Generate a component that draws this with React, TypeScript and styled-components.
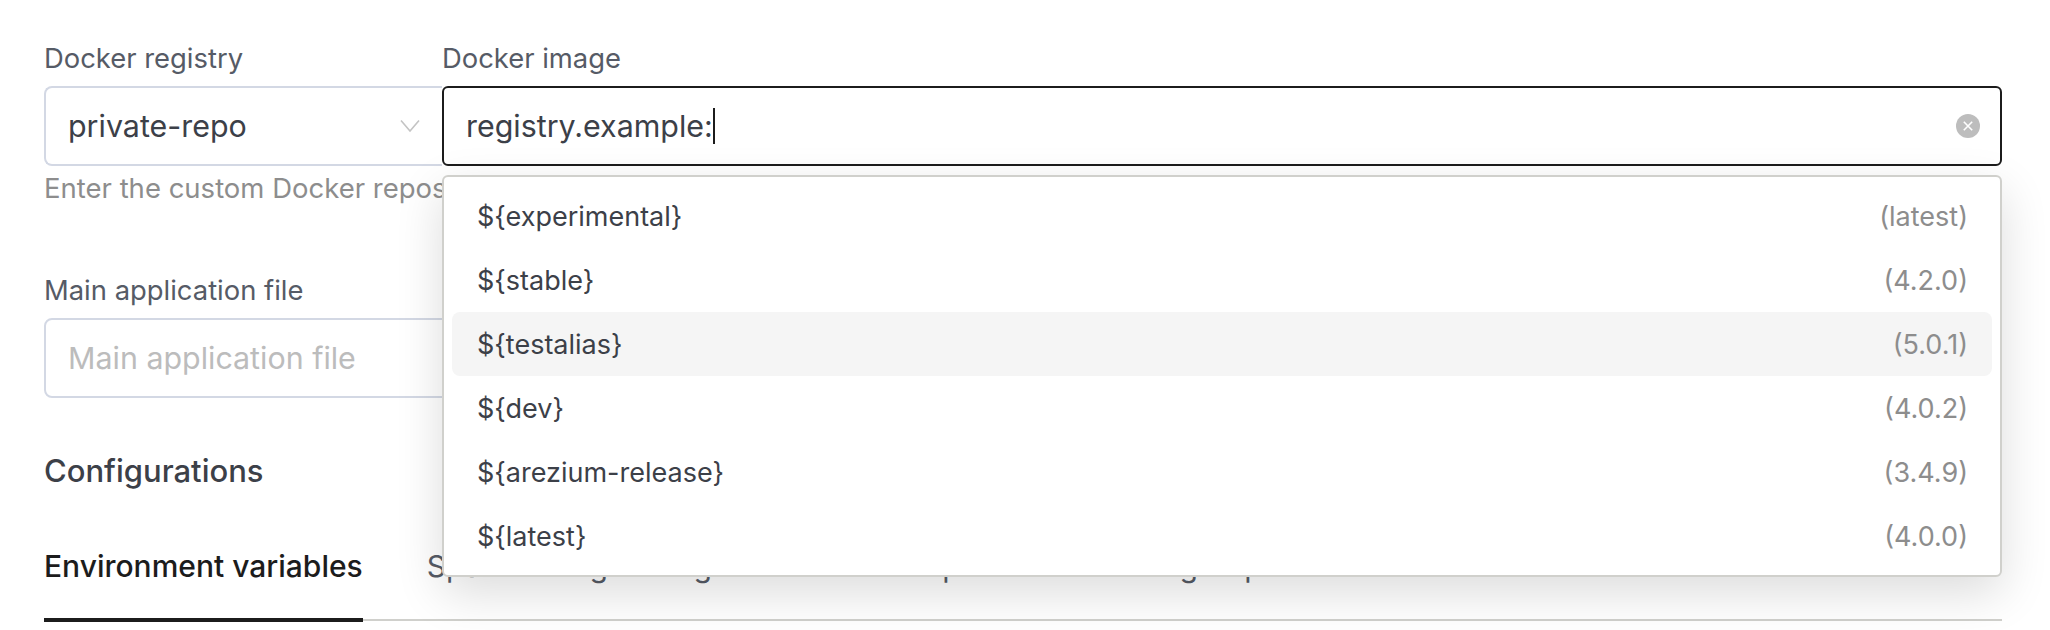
import React from "react";
import styled, { createGlobalStyle } from "styled-components";

const Global = createGlobalStyle`
  html, body { margin: 0; padding: 0; background: #fff; }
  body { font-family: Inter, "Liberation Sans", sans-serif; width: 2050px; height: 630px; overflow: hidden; }
`;

const Page = styled.div`
  box-sizing: border-box;
  width: 2050px;
  height: 630px;
  padding: 42px 48px 0 44px;
  display: flex;
  flex-direction: column;
  color: #3c4048;
`;

const FieldRow = styled.div`
  display: flex;
`;

const RegistryColumn = styled.div`
  width: 398px;
  flex: none;
`;

const ImageColumn = styled.div`
  flex: 1;
  position: relative;
`;

const Label = styled.div`
  font-size: 27.4px;
  line-height: 32px;
  height: 32px;
  margin-bottom: 12px;
  color: #565b66;
  white-space: nowrap;
`;

const Control = styled.div<{ $focused?: boolean; $joined?: boolean }>`
  box-sizing: border-box;
  height: 80px;
  display: flex;
  align-items: center;
  justify-content: space-between;
  padding: 0 22px;
  font-size: 30.4px;
  border: ${(p) => (p.$focused ? "2.5px solid #1c1c1c" : "2px solid #d3d8e4")};
  border-radius: ${(p) => (p.$focused ? "6px" : p.$joined ? "8px 0 0 8px" : "8px")};
  background: #fff;
  ${(p) => (p.$joined ? "border-right: none;" : "")}
`;

const Value = styled.span`
  color: #3c4048;
  white-space: nowrap;
`;

const Placeholder = styled.span`
  color: #bcbcbc;
  white-space: nowrap;
`;

const Caret = styled.span`
  display: inline-block;
  width: 2px;
  height: 36px;
  background: #1c1c1c;
  vertical-align: -7px;
`;

const ClearBadge = styled.svg`
  width: 24px;
  height: 24px;
  margin-right: -2px;
`;

const HelpText = styled.div`
  font-size: 27.5px;
  line-height: 33px;
  margin-top: 6px;
  color: #8d8d8d;
  white-space: nowrap;
`;

const MainFileSection = styled.div`
  margin-top: 69px;
`;

const Heading = styled.div`
  margin-top: 53px;
  font-size: 31px;
  line-height: 40px;
  font-weight: 500;
  color: #3c4048;
`;

const Tabs = styled.div`
  display: flex;
  gap: 64px;
  margin-top: 55px;
  border-bottom: 2px solid #d0d0cc;
  height: 75px;
  box-sizing: border-box;
`;

const Tab = styled.div<{ $active?: boolean }>`
  font-size: 30px;
  line-height: 40px;
  white-space: nowrap;
  height: 76px;
  box-sizing: border-box;
  color: ${(p) => (p.$active ? "#1c1c1c" : "#565b66")};
  font-weight: ${(p) => (p.$active ? 500 : 400)};
  ${(p) => (p.$active ? "border-bottom: 4px solid #1c1c1c;" : "")}
`;

const Menu = styled.div`
  position: absolute;
  left: 0;
  right: 0;
  top: 133px;
  box-sizing: border-box;
  height: 402px;
  padding: 7px 8px;
  background: #fff;
  border: 2px solid #d0d0cc;
  border-radius: 6px;
  box-shadow: 0 16px 48px rgba(0, 0, 0, 0.14);
  z-index: 2;
`;

const Option = styled.div<{ $active?: boolean }>`
  box-sizing: border-box;
  height: 64px;
  display: flex;
  align-items: center;
  justify-content: space-between;
  padding: 0 24px 0 25px;
  font-size: 27px;
  border-radius: 8px;
  background: ${(p) => (p.$active ? "#f5f5f5" : "transparent")};
`;

const OptionName = styled.span`
  color: #3c4048;
`;

const OptionVersion = styled.span`
  color: #8d8d8d;
`;

const options = [
  ["${experimental}", "(latest)"],
  ["${stable}", "(4.2.0)"],
  ["${testalias}", "(5.0.1)"],
  ["${dev}", "(4.0.2)"],
  ["${arezium-release}", "(3.4.9)"],
  ["${latest}", "(4.0.0)"],
];

export default function App() {
  return (
    <Page>
      <Global />
      <FieldRow>
        <RegistryColumn>
          <Label>Docker registry</Label>
          <Control $joined>
            <Value>private-repo</Value>
            <svg width="20" height="14" viewBox="0 0 20 14" fill="none" stroke="#c4c4c4" strokeWidth="1.6">
              <path d="M1 1.5 L10 12 L19 1.5" />
            </svg>
          </Control>
          <HelpText>Enter the custom Docker repository name</HelpText>
        </RegistryColumn>
        <ImageColumn>
          <Label>Docker image</Label>
          <Control $focused>
            <Value>
              registry.example:
              <Caret />
            </Value>
            <ClearBadge viewBox="0 0 24 24">
              <circle cx="12" cy="12" r="12" fill="#bdbdbd" />
              <path d="M7.8 7.8 L16.2 16.2 M16.2 7.8 L7.8 16.2" stroke="#fff" strokeWidth="1.6" />
            </ClearBadge>
          </Control>
          <Menu>
            {options.map(([name, version]) => (
              <Option key={name} $active={name === "${testalias}"}>
                <OptionName>{name}</OptionName>
                <OptionVersion>{version}</OptionVersion>
              </Option>
            ))}
          </Menu>
        </ImageColumn>
      </FieldRow>
      <MainFileSection>
        <Label>Main application file</Label>
        <Control>
          <Placeholder>Main application file</Placeholder>
        </Control>
      </MainFileSection>
      <Heading>Configurations</Heading>
      <Tabs>
        <Tab $active>Environment variables</Tab>
        <Tab>Spark config settings for the cluster pool in resource group</Tab>
      </Tabs>
    </Page>
  );
}
